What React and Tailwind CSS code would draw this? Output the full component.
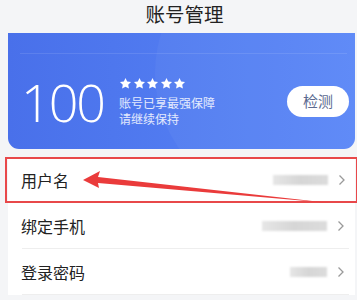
import React from "react";

const font = { fontFamily: '"Noto Sans CJK SC", "Noto Sans", sans-serif' };

function Star() {
    return (
        <svg width="13" height="13" viewBox="0 0 24 24" className="fill-white">
            <path d="M12 1.8l3.1 6.6 7.1.9-5.2 5 1.3 7.1L12 18l-6.3 3.4L7 14.3l-5.2-5 7.1-.9z" />
        </svg>
    );
}

function Chevron() {
    return (
        <svg width="8" height="12" viewBox="0 0 8 12" className="shrink-0">
            <path d="M1.5 1.5l4.5 4.5-4.5 4.5" fill="none" stroke="#9a9a9a" strokeWidth="1.3" />
        </svg>
    );
}

function Row({ label, blur, boxed, divider }) {
    return (
        <div className={`relative flex items-center h-[46px] pl-[13px] pr-[10px] ${boxed ? "border-2 border-[#e8484a] mx-[-3px] pl-[14px]" : ""}`}>
            <span className="text-[16px] text-[#222]">{label}</span>
            <div className="flex-1" />
            <div className={`h-[10px] ${blur} bg-gradient-to-r from-[#e6e6e6] via-[#d6d6d6] to-[#dcdcdc] blur-[1px] mr-[10px]`} />
            <Chevron />
            {divider && <div className="absolute left-[14px] right-[6px] bottom-0 h-px bg-[#eeeeee]" />}
        </div>
    );
}

export default function App() {
    return (
        <div className="w-[357px] h-[300px] overflow-hidden bg-[#f4f5f7] relative" style={font}>
            <div className="h-[33px] flex items-start justify-center pl-[12px] pt-[1px]">
                <h1 className="text-[19.5px] text-[#222] leading-[26px]">账号管理</h1>
            </div>

            {/* score card */}
            <div className="mx-[8px] mr-[2px] h-[116px] rounded-b-[11px] relative overflow-hidden bg-gradient-to-r from-[#4970ea] to-[#5a87f7]">
                <div className="absolute right-[-60px] top-[-90px] w-[260px] h-[260px] rounded-full bg-white/[0.04]" />
                <div className="absolute left-[12px] right-[8px] top-[20px] h-px bg-white/10" />
                <div className="relative flex items-center h-full pl-[13px] pr-[6px] pt-[21px]">
                    <span className="text-[52px] font-light text-white leading-none tracking-[-2px]" style={{ fontFamily: '"Open Sans", sans-serif' }}>100</span>
                    <div className="ml-[15px] flex flex-col">
                        <div className="flex gap-[0.5px] mb-[5px]">
                            <Star /><Star /><Star /><Star /><Star />
                        </div>
                        <span className="text-[12px] text-white/85 leading-[16px]">账号已享最强保障</span>
                        <span className="text-[12px] text-white/85 leading-[16px]">请继续保持</span>
                    </div>
                    <div className="flex-1" />
                    <button className="w-[62px] h-[31px] rounded-full bg-white text-[15px] text-[#5b6a90]">检测</button>
                </div>
            </div>

            {/* list */}
            <div className="mt-[8px] mx-[8px] mr-[2px] bg-white">
                <Row label="用户名" blur="w-[55px]" boxed />
                <Row label="绑定手机" blur="w-[65px]" divider />
                <Row label="登录密码" blur="w-[37px]" divider />
            </div>

            {/* annotation arrow */}
            <svg className="absolute left-0 top-0" width="357" height="300" viewBox="0 0 357 300">
                <path d="M330 203 L98 183 L99 188 L83 180 L100 171 L98 177 Z" fill="#ea3b3b" />
            </svg>
        </div>
    );
}
